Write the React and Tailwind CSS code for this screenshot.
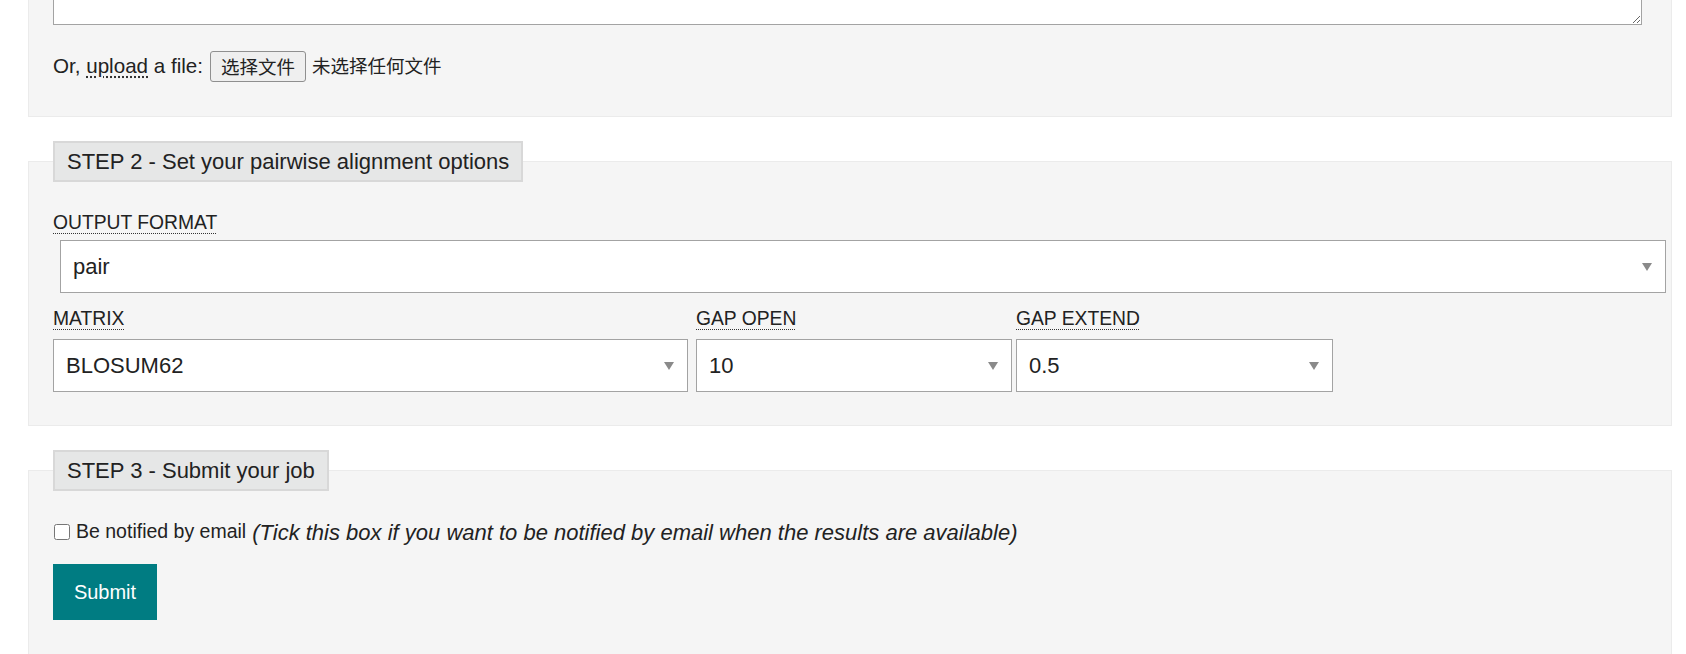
import { useState } from "react";

const font = "font-['Liberation_Sans',Arial,'Noto_Sans_CJK_SC',sans-serif]";

const Arrow = () => (
  <svg
    className="absolute right-[14px] top-1/2 -translate-y-1/2 pointer-events-none"
    width="10"
    height="8"
    viewBox="0 0 10 8"
  >
    <path d="M0 0 L10 0 L5 8 Z" fill="#8a8a8a" />
  </svg>
);

const Select = ({ value, options, className }) => (
  <div className={`relative ${className}`}>
    <select
      defaultValue={value}
      className="appearance-none w-full h-[53px] bg-white border border-[#a3a3a3] pl-[12px] pr-[36px] text-[22px] text-[#222] outline-none"
    >
      {options.map((o) => (
        <option key={o}>{o}</option>
      ))}
    </select>
    <Arrow />
  </div>
);

const Label = ({ children }) => (
  <div className="text-[19.3px] leading-[24px] text-[#222]">
    <span className="underline decoration-dotted decoration-[#333] underline-offset-[4px] decoration-1">
      {children}
    </span>
  </div>
);

const Legend = ({ children }) => (
  <legend className="bg-[#e6e7e7] border-2 border-[#d8d8d8] px-[12px] h-[41px] leading-[37px] text-[22px] text-[#222]">
    {children}
  </legend>
);

export default function App() {
  const [notify, setNotify] = useState(false);

  return (
    <div className={`${font} bg-white h-[654px] overflow-hidden text-[#222]`}>
      <div className="ml-[28px] w-[1644px]">
        {/* Step 1 (scrolled, top cut off) */}
        <div className="bg-[#f5f5f5] border-x border-b border-[#ebebeb] pl-[24px] pr-[29px] pb-[35px]">
          <textarea
            className="block w-full h-[140px] -mt-[115px] bg-white border border-[#a3a3a3] outline-none"
            defaultValue=""
          />
          <div className="flex items-center mt-[26px] h-[30px] text-[20.6px]">
            <span>
              Or,{" "}
              <span className="underline decoration-dotted decoration-[#333] underline-offset-[4px]">
                upload
              </span>{" "}
              a file:
            </span>
            <button className="ml-[7px] h-[31px] px-[10px] bg-[#efefef] border border-[#8f8f8f] rounded-[3px] text-[18.5px] leading-none text-[#222] font-['Noto_Sans_CJK_SC',sans-serif]">
              选择文件
            </button>
            <span className="ml-[6px] text-[18.5px] font-['Noto_Sans_CJK_SC',sans-serif]">
              未选择任何文件
            </span>
          </div>
        </div>

        {/* Step 2 */}
        <fieldset className="mt-[24px] bg-[#f5f5f5] border border-[#ebebeb] pl-[24px] pr-[29px] pt-[29px] pb-[33px]">
          <Legend>STEP 2 - Set your pairwise alignment options</Legend>
          <Label>OUTPUT FORMAT</Label>
          <Select
            value="pair"
            options={["pair", "markx0", "markx1", "markx2", "markx3", "srspair"]}
            className="mt-[5px] ml-[7px] -mr-[24px]"
          />
          <div className="flex mt-[14px]">
            <div className="w-[635px] mr-[8px]">
              <Label>MATRIX</Label>
              <Select
                value="BLOSUM62"
                options={["BLOSUM62", "BLOSUM45", "BLOSUM80", "PAM250"]}
                className="mt-[8px]"
              />
            </div>
            <div className="w-[316px] mr-[4px]">
              <Label>GAP OPEN</Label>
              <Select value="10" options={["1", "5", "10", "15", "25"]} className="mt-[8px]" />
            </div>
            <div className="w-[317px]">
              <Label>GAP EXTEND</Label>
              <Select value="0.5" options={["0.1", "0.5", "1", "5"]} className="mt-[8px]" />
            </div>
          </div>
        </fieldset>

        {/* Step 3 */}
        <fieldset className="mt-[24px] bg-[#f5f5f5] border border-[#ebebeb] pl-[24px] pr-[29px] pt-[29px] pb-[60px]">
          <Legend>STEP 3 - Submit your job</Legend>
          <div className="flex items-center h-[24px]">
            <input
              type="checkbox"
              checked={notify}
              onChange={(e) => setNotify(e.target.checked)}
              className="w-[16px] h-[16px] m-0 ml-[1px]"
            />
            <span className="ml-[6px] text-[19.5px]">Be notified by email</span>
            <span className="ml-[6px] text-[22px] italic">
              (Tick this box if you want to be notified by email when the results are available)
            </span>
          </div>
          <button className="mt-[20px] w-[104px] h-[56px] bg-[#007c82] text-white text-[20px]">
            Submit
          </button>
        </fieldset>
      </div>
    </div>
  );
}
